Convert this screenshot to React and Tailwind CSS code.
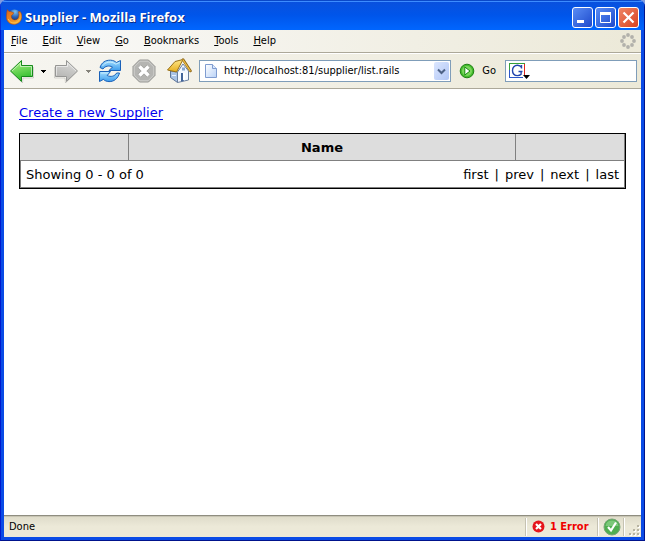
import React from "react";

const menus = ["File", "Edit", "View", "Go", "Bookmarks", "Tools", "Help"];
const pages = ["first", "prev", "next", "last"];

function FirefoxIcon() {
  return (
    <svg width="16" height="16" viewBox="0 0 16 16" className="shrink-0">
      <defs>
        <radialGradient id="globe" cx=".55" cy=".2" r=".8">
          <stop offset="0" stopColor="#7fc4ee" />
          <stop offset=".5" stopColor="#2a62b4" />
          <stop offset="1" stopColor="#0c2a70" />
        </radialGradient>
        <linearGradient id="fox" x1="0" y1="0" x2="1" y2="1">
          <stop offset="0" stopColor="#d8641a" />
          <stop offset=".5" stopColor="#ef8a20" />
          <stop offset="1" stopColor="#f6c040" />
        </linearGradient>
      </defs>
      <circle cx="8.4" cy="6.8" r="6.4" fill="url(#globe)" />
      <path d="M1.400.6 3 2.600c1-.4 1.800-.2 2.600.4L7.800 3.800 6.800 5.400 5.400 6.400c-.6 2.200.8 4.300 3 4.500 2.200.2 3.800-1.200 4.300-3l.3-2.700-.8-2.400 1.100.5.1-1.300c2 1.600 2.700 4.200 2.300 6.800-.6 3.800-3.600 6.600-7.500 6.600C3.600 15.400.4 12.200.4 8.200.4 5.200.8 2.400 1.400.6Z" fill="url(#fox)" stroke="#a8400c" strokeWidth=".5" />
      <path d="M2.200 10c1 2.600 3.200 3.900 5.800 3.900 2.800 0 4.800-1.500 5.700-3.900" fill="none" stroke="#fbc04a" strokeWidth="1" />
    </svg>
  );
}

function Arrow({ flip, id, light, dark, edge }) {
  return (
    <svg width="25" height="24" viewBox="0 0 25 24" className={flip ? "shrink-0 -scale-x-100" : "shrink-0"}>
      <defs>
        <linearGradient id={id} x1="0" y1="0" x2="0.3" y2="1">
          <stop offset="0" stopColor={light} />
          <stop offset="1" stopColor={dark} />
        </linearGradient>
      </defs>
      <path d="M2.500 13 13.500 24 14 19h10.500V8" fill="none" stroke="#00000022" />
      <path d="M1.500 12 12.500 1.500V6.500H23.500V17.500H12.500V22.500Z" fill={`url(#${id})`} stroke={edge} strokeLinejoin="round" />
      <path d="M3 12 11.500 4V7.500H22.500V16.500" fill="none" stroke="#fff" strokeOpacity=".55" />
    </svg>
  );
}

function Caret({ color }) {
  return (
    <svg width="5" height="3" viewBox="0 0 5 3" shapeRendering="crispEdges">
      <path d="M0 0H5V1H4V2H3V3H2V2H1V1H0Z" fill={color} />
    </svg>
  );
}

function ReloadIcon() {
  return (
    <svg width="24" height="24" viewBox="0 0 24 24">
      <defs>
        <linearGradient id="reload" x1="0" y1="0" x2="0" y2="1">
          <stop offset="0" stopColor="#a5e0ff" />
          <stop offset="1" stopColor="#3e9cec" />
        </linearGradient>
      </defs>
      <g fill="url(#reload)" stroke="#1a61b8" strokeLinejoin="round">
        <path d="M2 8.500C3.500 3.500 7.500 1 12.500 1.200c2.700.1 4.500 1 5.900 2.300L22.500 1.500V11.500H11L14.500 8C11 6.200 7 7 5 10Z" />
        <path d="M21.500 14C20 19.500 16 22.800 11 22.600c-2.500-.1-4.200-.9-5.600-2.200L1.500 22.500V12.500H12.500L9.200 16.500c3.600 1.800 7.500.8 9.500-2.500Z" />
      </g>
      <path d="M4.500 7C7 3.200 13 1.500 17.800 5.200L21.500 3.500M3 14h7" fill="none" stroke="#d7f3ff" strokeWidth=".8" />
    </svg>
  );
}

function StopIcon() {
  return (
    <svg width="24" height="24" viewBox="0 0 24 24">
      <path d="M7.500 1H16.500L23 7.500V16.500L16.500 23H7.500L1 16.500V7.500Z" fill="#b5b5b2" stroke="#969693" />
      <path d="M8 2.200H16L21.800 8V16L16 21.800H8L2.200 16V8Z" fill="none" stroke="#cfcfcc" />
      <path d="M7.500 7.500 16.500 16.500M16.500 7.500 7.500 16.500" stroke="#a2a29f" strokeWidth="5" />
      <path d="M7.500 7.500 16.500 16.500M16.500 7.500 7.500 16.500" stroke="#fff" strokeWidth="3.400" />
    </svg>
  );
}

function HomeIcon() {
  return (
    <svg width="26" height="26" viewBox="0 0 26 26">
      <defs>
        <linearGradient id="roof" x1="0" y1="0" x2="0" y2="1">
          <stop offset="0" stopColor="#ffe88a" />
          <stop offset="1" stopColor="#e6ad1c" />
        </linearGradient>
      </defs>
      <path d="M4.500 13 11.500 14V24.500L4.500 19.500Z" fill="#a9c3e6" stroke="#5d7396" strokeLinejoin="round" />
      <path d="M11.500 14 17 6 22.500 13V22L11.500 24.500Z" fill="#f4f8ff" stroke="#6a7f9e" strokeLinejoin="round" />
      <path d="M15 15H19V22.700L15 23.600Z" fill="#426499" />
      <path d="M17 15H19V22.700L17 22Z" fill="#fff" />
      <rect x="16" y="9.500" width="3" height="3" fill="#86a6d0" />
      <path d="M9 3.500 17 1.500 10.500 14 1.500 12Z" fill="url(#roof)" stroke="#987018" strokeLinejoin="round" />
      <path d="M17 1.500 24.500 13" fill="none" stroke="#8c6515" strokeWidth="2.600" strokeLinecap="round" />
      <path d="M17 1.800 24.200 12.800" fill="none" stroke="#eebd45" strokeWidth="1.200" strokeLinecap="round" />
      <path d="M6 17.500h4" stroke="#e8f1ff" />
    </svg>
  );
}

function PageIcon() {
  return (
    <svg width="12" height="14" viewBox="0 0 12 14" className="shrink-0">
      <defs>
        <linearGradient id="page" x1="0" y1="0" x2="1" y2="1">
          <stop offset="0" stopColor="#fff" />
          <stop offset="1" stopColor="#b9d2f7" />
        </linearGradient>
      </defs>
      <path d="M.5.5H7.500L11.500 4.500V13.500H.5Z" fill="url(#page)" stroke="#7f9cd0" />
      <path d="M7.500.5V4.500H11.500" fill="#dbe8fc" stroke="#7f9cd0" />
    </svg>
  );
}

function GoIcon() {
  return (
    <svg width="16" height="16" viewBox="0 0 16 16">
      <circle cx="8" cy="8" r="6.800" fill="#45bb2e" stroke="#1e8212" />
      <circle cx="8" cy="8" r="5" fill="#7ad75c" />
      <path d="M5.800 4V12L11 8Z" fill="#fff" stroke="#198a10" />
    </svg>
  );
}

function SearchIcon() {
  return (
    <svg width="22" height="18" viewBox="0 0 22 18" className="shrink-0">
      <rect x=".5" y="1.500" width="15" height="14" fill="#fff" />
      <path d="M0 1.500H16" stroke="#35a03a" />
      <path d="M.5 1V8" stroke="#35a03a" />
      <path d="M.5 8V16M0 15.500H14" stroke="#2c57c8" />
      <path d="M15.500 2V13" stroke="#df2820" />
      <path d="M12.500 3V6.500M12.500 5.500C11.500 3.700 10 3.300 8.500 3.300 5.400 3.300 3.500 5.500 3.500 8.500S5.400 13.600 8.500 13.600c1.500 0 2.800-.5 3.600-1.300V9.500M9.500 9.500H13.500" fill="none" stroke="#2346ad" strokeWidth="1.400" />
      <path d="M14 13H21L17.500 17Z" fill="#000" />
    </svg>
  );
}

function Throbber() {
  const dots = [[8, 2], [12, 4], [14, 8], [12, 12], [8, 14], [4, 12], [2, 8], [4, 4]];
  return (
    <svg width="16" height="16" viewBox="0 0 16 16">
      {dots.map(([x, y]) => (
        <circle key={`${x}-${y}`} cx={x} cy={y} r="1.900" fill="#b2b1ab" />
      ))}
    </svg>
  );
}

const frameButton = "flex h-[21px] w-[21px] items-center justify-center rounded-[3px] border border-white";

export default function App() {
  return (
    <div className="bg-[#7f9be0]">
      <div className="flex min-h-screen flex-col overflow-hidden rounded-t-[7px] bg-[#0a3fd8] font-['DejaVu_Sans_Condensed','DejaVu_Sans',sans-serif] text-[11px] leading-[14px] text-black">
        <header className="flex h-[30px] items-center bg-linear-to-b from-[#0a50dc] via-[#0055ea] to-[#0066ff] pt-1 pr-[6px] pl-[6px] shadow-[inset_0_1px_0_#0a48c8,inset_0_2px_0_#3c8cff,inset_1px_0_0_#0831d9,inset_-1px_0_0_#00138c]">
          <FirefoxIcon />
          <h1 className="ml-[3px] flex-1 font-['Open_Sans','Noto_Sans',sans-serif] text-[13px] leading-4 font-bold text-white [text-shadow:1px_1px_0_#0a2a86]">
            Supplier - Mozilla Firefox
          </h1>
          <div className="flex gap-[2px]">
            <button aria-label="Minimize" className={`${frameButton} bg-linear-to-br from-[#5a8cf4] to-[#1f48cc]`}>
              <svg width="19" height="19"><path d="M4 13.500H11" stroke="#fff" strokeWidth="3" /></svg>
            </button>
            <button aria-label="Maximize" className={`${frameButton} bg-linear-to-br from-[#5a8cf4] to-[#1f48cc]`}>
              <svg width="19" height="19"><path d="M4.500 5V14.500H14.500V5" fill="none" stroke="#fff" /><path d="M4 5.500H15" stroke="#fff" strokeWidth="3" /></svg>
            </button>
            <button aria-label="Close" className={`${frameButton} bg-linear-to-br from-[#ee8464] to-[#d8401c]`}>
              <svg width="19" height="19"><path d="M4.500 4.500 14.500 14.500M14.500 4.500 4.500 14.500" stroke="#fff" strokeWidth="2.200" /></svg>
            </button>
          </div>
        </header>

        <div className="flex flex-1 flex-col border border-t-0 border-r-[#00138c] border-b-[#00138c] border-l-[#0019cf]">
          <div className="flex flex-1 flex-col border-3 border-t-0 border-[#0a4be6]">
            <nav className="flex h-[23px] items-center justify-between border-b border-[#aca899] bg-linear-to-r from-[#fafafa] to-[#ece9d8] pr-[5px] pl-[7px]">
              <div className="flex gap-[15px]">
                {menus.map((name) => (
                  <button key={name}>
                    <span className="underline">{name[0]}</span>
                    {name.slice(1)}
                  </button>
                ))}
              </div>
              <Throbber />
            </nav>

            <div className="flex h-9 items-center border-t border-b border-t-white border-b-[#aca899] bg-linear-to-r from-[#f6f5f0] to-[#ece9d8] pr-1 pl-[5px]">
              <button aria-label="Back"><Arrow id="back" light="#b4f58a" dark="#2fbc2c" edge="#178a1c" /></button>
              <button aria-label="Back history" className="ml-[7px]"><Caret color="#000" /></button>
              <button aria-label="Forward" className="ml-2"><Arrow flip id="forward" light="#dededc" dark="#b4b4b2" edge="#969694" /></button>
              <button aria-label="Forward history" className="ml-[7px]"><Caret color="#85837b" /></button>
              <button aria-label="Reload" className="ml-[7px]"><ReloadIcon /></button>
              <button aria-label="Stop" className="ml-[10px]"><StopIcon /></button>
              <button aria-label="Home" className="ml-[10px]"><HomeIcon /></button>
              <div className="ml-[7px] flex h-[22px] min-w-0 flex-1 items-center border border-[#7f9db9] bg-white pl-[5px]">
                <PageIcon />
                <input aria-label="Address" defaultValue="http://localhost:81/supplier/list.rails" className="ml-[7px] min-w-0 flex-1 outline-none" />
                <button aria-label="Address history" className="mr-px flex h-[18px] w-[15px] items-center justify-center rounded-[2px] bg-linear-to-br from-[#dbe6fe] to-[#b1c6f6]">
                  <svg width="9" height="7"><path d="M1 1.500 4.500 5 8 1.500" fill="none" stroke="#4d6185" strokeWidth="2" /></svg>
                </button>
              </div>
              <button className="ml-2 flex items-center gap-[7px]"><GoIcon />Go</button>
              <div className="ml-[9px] flex h-[22px] w-[132px] items-center border border-[#7f9db9] bg-white pl-[3px]">
                <SearchIcon />
                <input aria-label="Search" className="min-w-0 flex-1 outline-none" />
              </div>
            </div>

            <main className="flex-1 bg-white px-[15px] pt-[15px] font-['DejaVu_Sans',sans-serif] text-[13px] leading-[18px]">
              <a href="#create" className="text-[#0000ee] underline underline-offset-2 [text-decoration-skip-ink:none]">Create a new Supplier</a>
              <table className="mt-[11px] w-full table-fixed border-separate border-spacing-0 border border-black">
                <thead>
                  <tr className="h-[27px] bg-[#dddddd]">
                    <th className="w-[18%] border-r border-b border-[#808080]" />
                    <th className="border-r border-b border-[#808080] pt-px">Name</th>
                    <th className="w-[18%] border-r border-b border-[#808080]" />
                  </tr>
                </thead>
                <tbody>
                  <tr className="h-[27px]">
                    <td colSpan={3} className="border-x border-b border-[#808080] px-[5px] pt-px">
                      <div className="flex justify-between">
                        <span>Showing 0 - 0 of 0</span>
                        <div className="flex gap-[6px]">
                          {pages.map((page, i) => (
                            <React.Fragment key={page}>
                              {i > 0 && <span>|</span>}
                              <span>{page}</span>
                            </React.Fragment>
                          ))}
                        </div>
                      </div>
                    </td>
                  </tr>
                </tbody>
              </table>
            </main>

            <footer className="flex h-[22px] items-center border-t border-[#8f8d80] bg-linear-to-b from-[#dedbc9] via-[#ece9d8] to-[#ece9d8] pl-[5px] shadow-[inset_0_1px_0_#c8c5b4]">
              <span className="flex-1">Done</span>
              <div className="flex h-[18px] w-[72px] items-center gap-[5px] border-l border-white pl-[5px] font-bold text-[#f00000] shadow-[-1px_0_0_#c5c2b2]">
                <svg width="13" height="13" viewBox="0 0 13 13" className="shrink-0">
                  <circle cx="6.500" cy="6.500" r="6" fill="#e5141c" />
                  <path d="M4 4 9 9M9 4 4 9" stroke="#fff" strokeWidth="2.200" />
                </svg>
                <span className="whitespace-nowrap">1 Error</span>
              </div>
              <div className="flex h-[18px] w-[26px] items-center justify-center border-l border-white shadow-[-1px_0_0_#c5c2b2]">
                <svg width="18" height="18" viewBox="0 0 18 18">
                  <circle cx="9" cy="9" r="8" fill="#4fae50" stroke="#78a578" />
                  <path d="M2.500 8A6.600 6.600 0 0 1 15.500 8Z" fill="#7cc87a" />
                  <path d="M5 9 8 12.500 13 4.500" fill="none" stroke="#fff" strokeWidth="2.200" />
                </svg>
              </div>
              <div className="flex h-[18px] w-[17px] items-end justify-end border-l border-white pr-px shadow-[-1px_0_0_#c5c2b2]">
                <svg width="11" height="11" shapeRendering="crispEdges">
                  {[[8, 0], [4, 4], [8, 4], [0, 8], [4, 8], [8, 8]].map(([x, y]) => (
                    <g key={`${x}-${y}`}>
                      <rect x={x + 1} y={y + 1} width="2" height="2" fill="#fff" />
                      <rect x={x} y={y} width="2" height="2" fill="#b8b4a2" />
                    </g>
                  ))}
                </svg>
              </div>
            </footer>
          </div>
        </div>
      </div>
    </div>
  );
}
